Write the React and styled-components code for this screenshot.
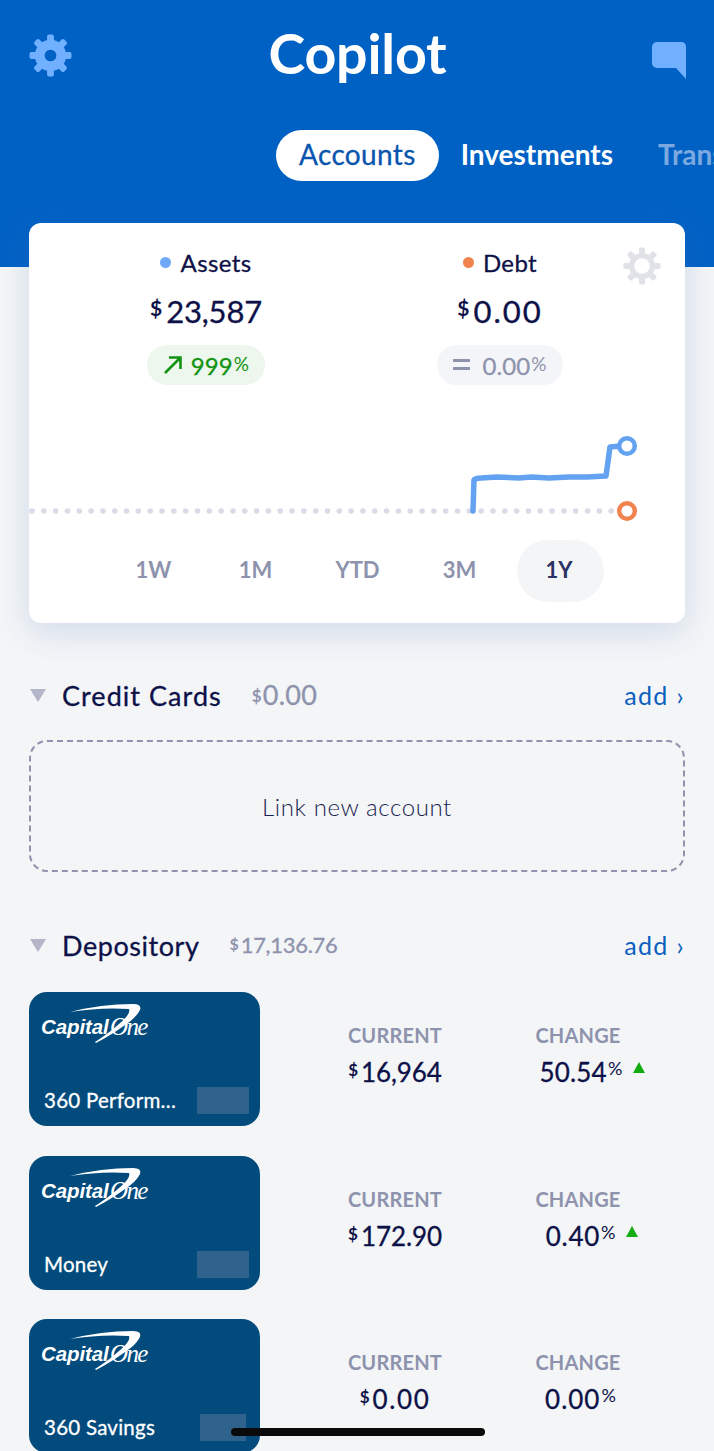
import React from "react";
import styled, { createGlobalStyle, css } from "styled-components";

const Global = createGlobalStyle`
  html, body { margin: 0; padding: 0; background: #f3f5f7; }
  body { font-family: "Lato", "Liberation Sans", sans-serif; color: #0d1147; }
`;

const medium = css`
  font-weight: 400;
  -webkit-text-stroke: 0.3px currentColor;
`;

const Page = styled.div`
  position: relative;
  width: 714px;
  height: 1451px;
  overflow: hidden;
  background: #f3f5f7;
`;

const Header = styled.header`
  height: 267px;
  background: #0061c4;
  box-sizing: border-box;
  padding-top: 24px;
`;

const TopBar = styled.div`
  display: grid;
  grid-template-columns: 1fr auto 1fr;
  align-items: center;
  padding: 0 28px 0 29px;
  height: 62px;
`;

const TopLeft = styled.div`
  display: flex;
  justify-content: flex-start;
`;

const TopRight = styled.div`
  display: flex;
  justify-content: flex-end;
  padding-top: 10px;
`;

const Title = styled.h1`
  margin: -4px 0 0;
  color: #fff;
  font-size: 55.5px;
  line-height: 62px;
  font-weight: 700;
  letter-spacing: -0.2px;
`;

const Tabs = styled.nav`
  display: flex;
  align-items: center;
  margin-top: 44px;
  padding-left: 276px;
  height: 51px;
  white-space: nowrap;
  overflow: hidden;
`;

const Tab = styled.span`
  flex: none;
  font-size: 28px;
  ${(p) => (p.$active ? medium : "font-weight: 700;")}
  letter-spacing: ${(p) => (p.$active ? "0.35px" : "0")};
  height: 51px;
  line-height: 48px;
  border-radius: 26px;
  padding: ${(p) => (p.$active ? "0 23px" : "0")};
  margin-right: ${(p) => (p.$active ? "22px" : "45px")};
  background: ${(p) => (p.$active ? "#fff" : "transparent")};
  color: ${(p) => (p.$active ? "#0a55ad" : p.$dim ? "#7ba9e0" : "#fff")};
`;

const Summary = styled.section`
  position: relative;
  box-sizing: border-box;
  width: 656px;
  height: 400px;
  margin: -44px 0 0 29px;
  padding-top: 24px;
  border-radius: 12px;
  background: #fff;
  box-shadow: 0 8px 32px rgba(70, 110, 180, 0.2);
`;

const Totals = styled.div`
  display: grid;
  grid-template-columns: 294px 294px;
  padding-left: 30px;
`;

const Total = styled.div`
  display: flex;
  flex-direction: column;
  align-items: center;
`;

const Legend = styled.div`
  display: flex;
  align-items: center;
  gap: 9px;
  height: 30px;
  font-size: 24px;
  ${medium}
  letter-spacing: 0.4px;
`;

const Dot = styled.i`
  width: 11px;
  height: 11px;
  border-radius: 50%;
  background: ${(p) => p.$color};
`;

const BigAmount = styled.div`
  display: flex;
  align-items: flex-start;
  height: 40px;
  margin-top: 14px;
  font-size: 31px;
  line-height: 40px;
  ${medium}
  letter-spacing: ${(p) => p.$spacing ?? -0.2}px;
`;

const Currency = styled.span`
  font-size: ${(p) => p.$size || 21}px;
  line-height: ${(p) => p.$size || 21}px;
  margin-top: ${(p) => p.$drop ?? 6}px;
  margin-right: ${(p) => p.$gap ?? 4}px;
  font-weight: 700;
  letter-spacing: 0;
  -webkit-text-stroke: 0;
  color: ${(p) => p.$color || "inherit"};
`;

const Badge = styled.div`
  display: flex;
  align-items: center;
  gap: ${(p) => p.$gap}px;
  height: 40px;
  margin-top: 14px;
  padding: 0 16px;
  border-radius: 20px;
  background: ${(p) => p.$bg};
  color: ${(p) => p.$color};
  font-size: 24px;
  ${medium}
  letter-spacing: 0.1px;
`;

const Percent = styled.span`
  font-size: ${(p) => p.$size || 19}px;
  font-weight: 400;
  -webkit-text-stroke: 0;
  margin-left: 1px;
  position: relative;
  top: ${(p) => p.$top ?? -4}px;
`;

const Settings = styled.div`
  position: absolute;
  top: 24px;
  right: 24px;
  line-height: 0;
`;

const Chart = styled.svg`
  display: block;
  width: 656px;
  height: 110px;
  margin-top: 39px;
`;

const Ranges = styled.div`
  display: flex;
  justify-content: center;
  margin-top: 6px;
`;

const Range = styled.div`
  box-sizing: border-box;
  width: ${(p) => (p.$active ? "87px" : "102px")};
  margin: ${(p) => (p.$active ? "0 7.5px 0 6.5px" : "0")};
  padding-right: ${(p) => (p.$active ? "3px" : "0")};
  height: 62px;
  line-height: 60px;
  border-radius: 31px;
  text-align: center;
  font-size: 22px;
  font-weight: 700;
  color: ${(p) => (p.$active ? "#2b3064" : "#8e93ad")};
  background: ${(p) => (p.$active ? "#f3f5f7" : "transparent")};
`;

const SectionHead = styled.div`
  display: flex;
  align-items: center;
  height: 40px;
  margin: ${(p) => p.$top}px 29px 0 30px;
`;

const Caret = styled.svg`
  flex: none;
  width: 16px;
  height: 13px;
  margin-right: 16px;
`;

const SectionName = styled.h2`
  margin: 0;
  font-size: 27px;
  ${medium}
  letter-spacing: ${(p) => p.$spacing}px;
`;

const SectionTotal = styled.div`
  display: flex;
  align-items: flex-start;
  margin-left: 30px;
  font-size: ${(p) => p.$size}px;
  line-height: 30px;
  ${medium}
  color: #8e93ad;
  letter-spacing: ${(p) => p.$spacing}px;
`;

const Add = styled.span`
  margin-left: auto;
  font-size: 25px;
  color: #0a5fbe;
  letter-spacing: 1.4px;
`;

const LinkBox = styled.div`
  display: flex;
  align-items: center;
  justify-content: center;
  box-sizing: border-box;
  width: 656px;
  height: 132px;
  margin: 25px 0 0 29px;
  border: 2px dashed #8f93ad;
  border-radius: 18px;
  font-size: 24px;
  font-weight: 300;
  letter-spacing: 0.6px;
  color: #1a1e50;
`;

const AccountList = styled.div`
  display: flex;
  flex-direction: column;
  gap: 29.5px;
  margin: 27px 0 0 29px;
`;

const Account = styled.article`
  display: grid;
  grid-template-columns: 274.5px 183px 183px;
  height: 134px;
`;

const BankCard = styled.div`
  position: relative;
  width: 231px;
  height: 134px;
  border-radius: 18px;
  background: #024b7c;
  overflow: hidden;
`;

const Logo = styled.div`
  position: absolute;
  left: 12px;
  top: 11px;
  width: 106px;
  height: 42px;
  color: #fff;
`;

const Swoosh = styled.svg`
  position: absolute;
  left: 0;
  top: 0;
  width: 106px;
  height: 42px;
`;

const LogoBold = styled.span`
  position: absolute;
  left: 0;
  top: 13px;
  font-family: "Liberation Sans", sans-serif;
  font-size: 20.5px;
  line-height: 22px;
  font-weight: 700;
  font-style: italic;
  letter-spacing: -0.1px;
`;

const LogoThin = styled.span`
  position: absolute;
  left: 69px;
  top: 9px;
  font-family: "Liberation Serif", serif;
  font-size: 25px;
  line-height: 30px;
  font-style: italic;
  letter-spacing: -1.6px;
`;

const CardName = styled.div`
  position: absolute;
  left: 15px;
  bottom: 13px;
  color: #fff;
  font-size: 20.5px;
  line-height: 26px;
  ${medium}
  letter-spacing: 0.25px;
`;

const Masked = styled.div`
  position: absolute;
  left: ${(p) => p.$left}px;
  width: ${(p) => p.$width}px;
  bottom: 12px;
  height: 27px;
  background: #2f628c;
`;

const Stat = styled.div`
  display: flex;
  flex-direction: column;
  align-items: center;
  padding-top: 30px;
`;

const StatLabel = styled.div`
  font-size: 20px;
  line-height: 26px;
  font-weight: 700;
  color: #8e93ad;
  letter-spacing: 0.2px;
`;

const StatValue = styled.div`
  position: relative;
  display: flex;
  align-items: flex-start;
  height: 34px;
  margin: 7px 0 0 ${(p) => p.$shift || 0}px;
  font-size: 26px;
  line-height: 34px;
  ${medium}
  letter-spacing: ${(p) => p.$spacing ?? -0.1}px;
`;

const Up = styled.i`
  position: absolute;
  right: -22px;
  top: 7px;
  width: 0;
  height: 0;
  border-left: 6.5px solid transparent;
  border-right: 6.5px solid transparent;
  border-bottom: 11px solid #12ab12;
`;

const HomeBar = styled.div`
  position: absolute;
  left: 231px;
  top: 1428px;
  width: 254px;
  height: 8px;
  border-radius: 4px;
  background: #0a0a0a;
`;

function Gear({ size, color, hole, core }) {
  const teeth = [0, 45, 90, 135, 180, 225, 270, 315];
  return (
    <svg width={size} height={size} viewBox="0 0 44 44">
      {teeth.map((a) => (
        <rect key={a} x="18.5" y="0.5" width="7" height="9" rx="2" fill={color} transform={`rotate(${a} 22 22)`} />
      ))}
      <circle cx="22" cy="22" r={(core + hole) / 2} fill="none" stroke={color} strokeWidth={core - hole} />
    </svg>
  );
}

function Bubble() {
  return (
    <svg width="34" height="37" viewBox="0 0 34 37">
      <path d="M5 0H29.5A4.5 4.5 0 0 1 34 4.5V37L24 26H5A5 5 0 0 1 0 21V5A5 5 0 0 1 5 0Z" fill="#70b0ff" />
    </svg>
  );
}

const blue =
  "M444 287 L445 256 Q446 254 452 254 L468 253 L490 254 L502 253 L520 254 L540 253 L558 253 L577 252 L581 223 L592 222";

function ChartArt() {
  const dots = [];
  for (let x = 3; x < 588; x += 11.82) dots.push(x);
  return (
    <Chart viewBox="0 0 656 110">
      {dots.map((x) => (
        <circle key={x} cx={x} cy="87" r="2.8" fill="#d9dce6" />
      ))}
      <path d={blue} transform="translate(0 -200)" fill="none" stroke="#62a2f0" strokeWidth="5.5" strokeLinecap="round" strokeLinejoin="round" />
      <circle cx="598" cy="22" r="7.8" fill="#fff" stroke="#62a2f0" strokeWidth="4.5" />
      <circle cx="598" cy="87" r="7.8" fill="#fff" stroke="#f0834e" strokeWidth="4.5" />
    </Chart>
  );
}

function BankLogo() {
  return (
    <Logo>
      <Swoosh viewBox="0 0 106 42">
        <path d="M29 9 Q60 1 92 1 Q101 1 99 7 Q95 15 84 22 Q72 31 55 40 L54 39 Q68 30 78 21 Q90 11 88 6 Q60 4 29 9Z" fill="#fff" />
      </Swoosh>
      <LogoBold>Capital</LogoBold>
      <LogoThin>One</LogoThin>
    </Logo>
  );
}

const accounts = [
  { name: "360 Perform…", left: 168, width: 52, current: "16,964", change: "50.54", up: true, curSp: -0.1, chgSp: 0.2 },
  { name: "Money", left: 168, width: 52, current: "172.90", change: "0.40", up: true, curSp: -0.1, chgSp: 0.7 },
  { name: "360 Savings", left: 171, width: 46, current: "0.00", change: "0.00", up: false, curSp: 1.6, chgSp: 1 },
];

export default function App() {
  return (
    <Page>
      <Global />
      <Header>
        <TopBar>
          <TopLeft>
            <Gear size={43} color="#70b0ff" hole={6} core={16} />
          </TopLeft>
          <Title>Copilot</Title>
          <TopRight>
            <Bubble />
          </TopRight>
        </TopBar>
        <Tabs>
          <Tab $active>Accounts</Tab>
          <Tab>Investments</Tab>
          <Tab $dim>Transactions</Tab>
        </Tabs>
      </Header>

      <Summary>
        <Totals>
          <Total>
            <Legend>
              <Dot $color="#6ea8f7" />
              Assets
            </Legend>
            <BigAmount>
              <Currency>$</Currency>23,587
            </BigAmount>
            <Badge $gap={8} $bg="#edf7ed" $color="#129412">
              <svg width="20" height="20" viewBox="0 0 20 20" fill="none" stroke="#129412" strokeWidth="2.6">
                <path d="M2 18L17 3M6 2.5H17.5V14" />
              </svg>
              <span>
                999<Percent>%</Percent>
              </span>
            </Badge>
          </Total>
          <Total>
            <Legend>
              <Dot $color="#f0834e" />
              Debt
            </Legend>
            <BigAmount $spacing={2}>
              <Currency>$</Currency>0.00
            </BigAmount>
            <Badge $gap={11} $bg="#f4f5f8" $color="#8e93ad">
              <svg width="18" height="14" viewBox="0 0 18 14" fill="#8e93ad">
                <rect y="1" width="17" height="3" rx="0.5" />
                <rect y="9" width="17" height="3" rx="0.5" />
              </svg>
              <span>
                0.00<Percent>%</Percent>
              </span>
            </Badge>
          </Total>
        </Totals>
        <Settings>
          <Gear size={38} color="#e0e2e8" hole={9} core={15} />
        </Settings>
        <ChartArt />
        <Ranges>
          <Range>1W</Range>
          <Range>1M</Range>
          <Range>YTD</Range>
          <Range>3M</Range>
          <Range $active>1Y</Range>
        </Ranges>
      </Summary>

      <SectionHead $top={52}>
        <Caret viewBox="0 0 16 13"><path d="M0 0H16L8 13Z" fill="#b3b6c8" /></Caret>
        <SectionName $spacing={1.05}>Credit Cards</SectionName>
        <SectionTotal $size={27} $spacing={0.3}>
          <Currency $size={17} $drop={7} $gap={1} $color="#8e93ad">$</Currency>0.00
        </SectionTotal>
        <Add>add ›</Add>
      </SectionHead>
      <LinkBox>Link new account</LinkBox>

      <SectionHead $top={53}>
        <Caret viewBox="0 0 16 13"><path d="M0 0H16L8 13Z" fill="#b3b6c8" /></Caret>
        <SectionName $spacing={0.55}>Depository</SectionName>
        <SectionTotal $size={22} $spacing={-0.3}>
          <Currency $size={16} $drop={6} $gap={2} $color="#8e93ad">$</Currency>17,136.76
        </SectionTotal>
        <Add>add ›</Add>
      </SectionHead>

      <AccountList>
        {accounts.map((a) => (
          <Account key={a.name}>
            <BankCard>
              <BankLogo />
              <CardName>{a.name}</CardName>
              <Masked $left={a.left} $width={a.width} />
            </BankCard>
            <Stat>
              <StatLabel>CURRENT</StatLabel>
              <StatValue $spacing={a.curSp}>
                <Currency $size={17} $drop={6} $gap={3}>$</Currency>
                {a.current}
              </StatValue>
            </Stat>
            <Stat>
              <StatLabel>CHANGE</StatLabel>
              <StatValue $shift={6} $spacing={a.chgSp}>
                {a.change}
                <Percent $size={18} $top={-4}>%</Percent>
                {a.up && <Up />}
              </StatValue>
            </Stat>
          </Account>
        ))}
      </AccountList>
      <HomeBar />
    </Page>
  );
}
